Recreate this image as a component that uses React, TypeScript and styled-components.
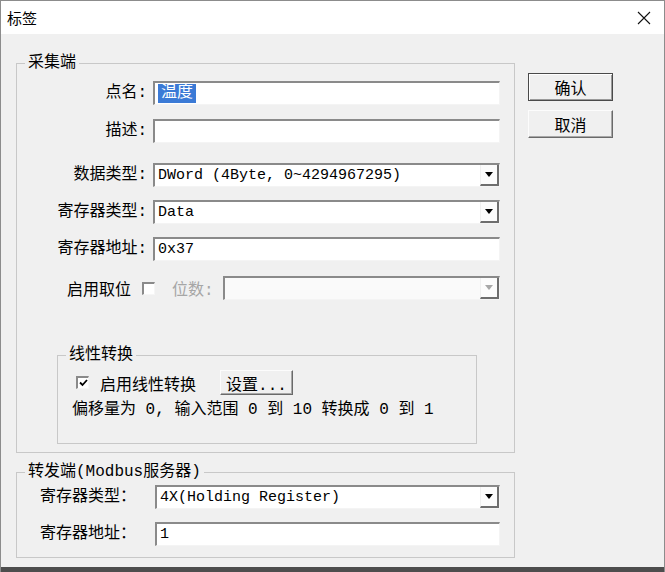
import * as React from "react"
import styled, { createGlobalStyle } from "styled-components"

const GlobalStyle = createGlobalStyle`
    html, body {
        margin: 0;
        padding: 0;
        background: #4d4d4d;
    }
    body {
        font-family: "Noto Sans CJK SC", "Liberation Sans", sans-serif;
        color: #000;
    }
`

const MONO = `"Liberation Mono", "Noto Sans CJK SC", monospace`

const Window = styled.div`
    width: 665px;
    height: 572px;
    box-sizing: border-box;
    display: flex;
    flex-direction: column;
    background: #f0f0f0;
    border: 1px solid #8c8c8c;
    border-bottom: none;
    overflow: hidden;
`

const TitleBar = styled.div`
    height: 33px;
    flex: none;
    background: #fff;
    display: flex;
    align-items: center;
    justify-content: space-between;
    padding: 0 13px 0 6px;
`
const Title = styled.div`
    font-size: 15px;
    line-height: 18px;
`
const CloseIcon = () =>
    <svg width="14" height="14" viewBox="0 0 14 14">
        <path d="M1 1 L13 13 M13 1 L1 13" stroke="#111" strokeWidth="1.1" fill="none" />
    </svg>

const Body = styled.div`
    flex: 1;
    display: flex;
    gap: 13px;
    padding: 20px 0 0 15px;
`
const LeftCol = styled.div`
    width: 499px;
    display: flex;
    flex-direction: column;
`
const GroupBox = styled.fieldset<{ $h: number, $mt?: number, $ml?: number, $w?: number }>`
    margin: ${p => p.$mt || 0}px 0 0 ${p => p.$ml || 0}px;
    padding: 0;
    min-width: 0;
    width: ${p => p.$w ? p.$w + "px" : "auto"};
    height: ${p => p.$h}px;
    box-sizing: border-box;
    border: 1px solid #c8c8c8;
`
const Legend = styled.legend`
    margin-left: 8px;
    padding: 0 3px;
    font-size: 16px;
    line-height: 18px;
    font-family: ${MONO};
`
const GroupContent = styled.div<{ $pt: number }>`
    padding-top: ${p => p.$pt}px;
    display: flex;
    flex-direction: column;
`

const Row = styled.div<{ $mt?: number }>`
    display: grid;
    grid-template-columns: 130px 347px;
    column-gap: 6px;
    align-items: center;
    height: 24px;
    margin-top: ${p => p.$mt || 0}px;
`
const Label = styled.div`
    text-align: right;
    font-size: 16px;
    line-height: 24px;
    white-space: nowrap;
    font-family: ${MONO};
`
const Field = styled.div<{ $disabled?: boolean }>`
    height: 24px;
    box-sizing: border-box;
    background: ${p => p.$disabled ? "#fafafa" : "#fff"};
    border-style: solid;
    border-width: 2px 1px 1px 2px;
    border-color: #8a8a8a #f4f4f4 #f4f4f4 #8a8a8a;
    display: flex;
    align-items: center;
    padding-left: 3px;
    font-family: ${MONO};
    font-size: 15px;
    white-space: nowrap;
    overflow: hidden;
`
const FieldText = styled.span`
    flex: 1;
`
const Selected = styled.span`
    background: #3b7ad6;
    color: #fff;
    font-size: 16px;
    line-height: 19px;
    padding: 0 3px;
`
const DropButton = styled.div<{ $disabled?: boolean }>`
    width: 19px;
    height: 100%;
    box-sizing: border-box;
    flex: none;
    display: flex;
    align-items: center;
    justify-content: center;
    background: #fcfcfc;
    border-right: 2px solid #6e6e6e;
    border-bottom: 2px solid #6e6e6e;
    border-left: 1px solid #f0f0f0;
    color: ${p => p.$disabled ? "#a8a8a8" : "#000"};
`
const Arrow = () =>
    <svg width="8" height="5" viewBox="0 0 8 5">
        <path d="M0 0 H8 L4 5 Z" fill="currentColor" />
    </svg>

const Select = (props: { value?: string, disabled?: boolean }) =>
    <Field $disabled={props.disabled}>
        <FieldText>{props.value}</FieldText>
        <DropButton $disabled={props.disabled}><Arrow /></DropButton>
    </Field>

const BitRow = styled.div`
    display: flex;
    align-items: center;
    height: 24px;
    margin-top: 15px;
    padding-left: 50px;
    padding-right: 14px;
    font-size: 16px;
    font-family: ${MONO};
`
const Check = styled.div`
    width: 13px;
    height: 13px;
    flex: none;
    box-sizing: border-box;
    background: #fff;
    border-style: solid;
    border-width: 2px 1px 1px 2px;
    border-color: #8a8a8a #f6f6f6 #f6f6f6 #8a8a8a;
    display: flex;
    align-items: center;
    justify-content: center;
`
const CheckMark = () =>
    <svg width="9" height="8" viewBox="0 0 9 8">
        <path d="M1 3.5 L3.5 6 L8 1" stroke="#000" strokeWidth="1.8" fill="none" />
    </svg>
const Muted = styled.span`
    color: #a6a6a6;
    margin-left: 17px;
    margin-right: 9px;
`
const BitSelect = styled.div`
    flex: 1;
`

const LinearRow = styled.div`
    display: flex;
    align-items: center;
    height: 25px;
    padding-left: 18px;
    font-size: 16px;
    font-family: ${MONO};
`
const CheckLabel = styled.span`
    margin-left: 11px;
    margin-right: 24px;
`
const InfoLine = styled.div`
    margin-top: 6px;
    padding-left: 14px;
    font-size: 16px;
    line-height: 18px;
    font-family: ${MONO};
    white-space: nowrap;
`

const Row2 = styled.div<{ $mt?: number }>`
    display: grid;
    grid-template-columns: 108px 345px;
    column-gap: 7px;
    align-items: center;
    height: 24px;
    padding-left: 23px;
    margin-top: ${p => p.$mt || 0}px;
`
const Label2 = styled(Label)`
    text-align: left;
`

const ButtonCol = styled.div`
    margin-top: 19px;
    display: flex;
    flex-direction: column;
    gap: 9px;
`
const Button = styled.div<{ $default?: boolean, $w?: number, $h?: number }>`
    width: ${p => p.$w || 85}px;
    height: ${p => p.$h || 28}px;
    box-sizing: border-box;
    display: flex;
    align-items: center;
    justify-content: center;
    background: #f0f0f0;
    font-size: 16px;
    font-family: ${MONO};
    border: 1px solid;
    border-color: ${p => p.$default ? "#4a4a4a" : "#fcfcfc #6a6a6a #6a6a6a #fcfcfc"};
    box-shadow: ${p => p.$default
        ? "inset 1px 1px #fff, inset -1px -1px #9a9a9a"
        : "inset -1px -1px #a8a8a8"};
`

const BottomStrip = styled.div`
    height: 5px;
    flex: none;
    background: #4d4d4d;
`

const App = () =>
<Window>
    <GlobalStyle />
    <TitleBar>
        <Title>标签</Title>
        <CloseIcon />
    </TitleBar>
    <Body>
        <LeftCol>
            <GroupBox $h={399}>
                <Legend>采集端</Legend>
                <GroupContent $pt={9}>
                    <Row>
                        <Label>点名:</Label>
                        <Field><Selected>温度</Selected></Field>
                    </Row>
                    <Row $mt={14}>
                        <Label>描述:</Label>
                        <Field />
                    </Row>
                    <Row $mt={20}>
                        <Label>数据类型:</Label>
                        <Select value="DWord (4Byte, 0~4294967295)" />
                    </Row>
                    <Row $mt={13}>
                        <Label>寄存器类型:</Label>
                        <Select value="Data" />
                    </Row>
                    <Row $mt={13}>
                        <Label>寄存器地址:</Label>
                        <Field>0x37</Field>
                    </Row>
                    <BitRow>
                        <span>启用取位</span>
                        <Check style={{ marginLeft: 11 }} />
                        <Muted>位数:</Muted>
                        <BitSelect><Select disabled /></BitSelect>
                    </BitRow>
                    <GroupBox $h={98} $mt={46} $ml={40} $w={420}>
                        <Legend>线性转换</Legend>
                        <GroupContent $pt={6}>
                            <LinearRow>
                                <Check><CheckMark /></Check>
                                <CheckLabel>启用线性转换</CheckLabel>
                                <Button $w={73} $h={25}>设置...</Button>
                            </LinearRow>
                            <InfoLine>偏移量为 0, 输入范围 0 到 10 转换成 0 到 1</InfoLine>
                        </GroupContent>
                    </GroupBox>
                </GroupContent>
            </GroupBox>
            <GroupBox $h={95} $mt={10}>
                <Legend>转发端(Modbus服务器)</Legend>
                <GroupContent $pt={4}>
                    <Row2>
                        <Label2>寄存器类型：</Label2>
                        <Select value="4X(Holding Register)" />
                    </Row2>
                    <Row2 $mt={13}>
                        <Label2>寄存器地址：</Label2>
                        <Field>1</Field>
                    </Row2>
                </GroupContent>
            </GroupBox>
        </LeftCol>
        <ButtonCol>
            <Button $default>确认</Button>
            <Button>取消</Button>
        </ButtonCol>
    </Body>
    <BottomStrip />
</Window>

export default App
